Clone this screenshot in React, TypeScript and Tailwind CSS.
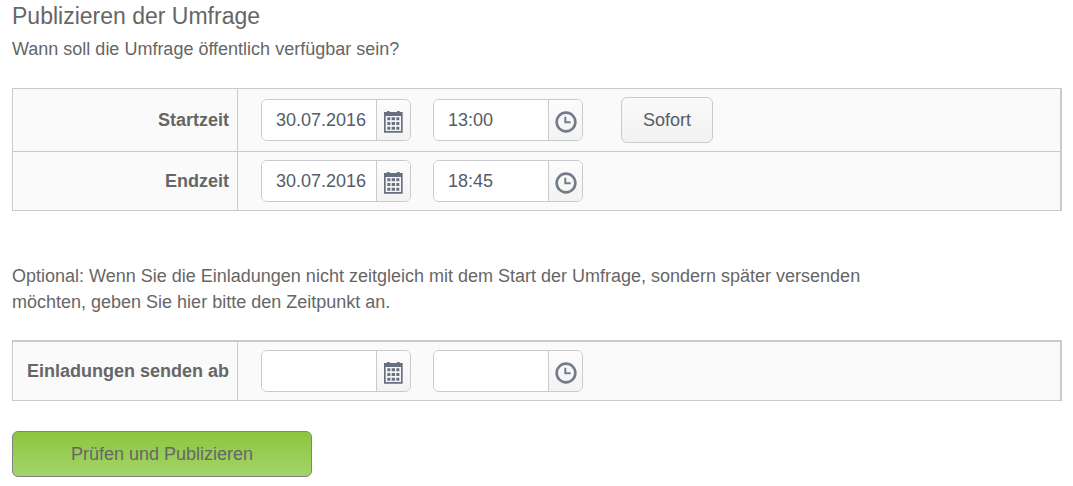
import { useState } from "react";

type PickerFieldProps = { label: string; kind: "date" | "time"; value: string; onChange: (value: string) => void };

function CalendarIcon() {
    return (
        <svg width="19" height="22" viewBox="0 0 57 66" fill="#667080" aria-hidden="true">
            <path d="M9 0h8v6H9zM39 0h8v6h-8z" />
            <path fillRule="evenodd" d="M0 3h56v62H0zM5 15v45h46V15z" />
            <path d="M10 19h9v9h-9zM23 19h10v9H23zM37 19h9v9h-9zM10 33h9v9h-9zM23 33h10v9H23zM37 33h9v9h-9zM10 47h9v9h-9zM23 47h10v9H23zM37 47h9v9h-9z" />
        </svg>
    );
}

function ClockIcon() {
    return (
        <svg width="22" height="22" viewBox="0 0 66 66" fill="none" stroke="#747b89" aria-hidden="true">
            <circle cx="33" cy="33" r="28" strokeWidth="8" />
            <path d="M31 17v17h16" strokeWidth="6" />
        </svg>
    );
}

function PickerField({ label, kind, value, onChange }: PickerFieldProps) {
    return (
        <div className="flex h-[42px] w-[150px] overflow-hidden rounded-md border border-[#c9cacf] bg-white">
            <input type="text" aria-label={label} value={value} onChange={(e) => onChange(e.target.value)}
                className="min-w-0 flex-1 bg-white pl-3.5 text-lg text-[#555c69] outline-none" />
            <button type="button" aria-label={`${label} auswählen`}
                className="flex w-[34px] shrink-0 items-center justify-center border-l border-[#c9cacf] bg-linear-to-b from-[#fcfcfc] to-[#f3f3f3] pt-1">
                {kind === "date" ? <CalendarIcon /> : <ClockIcon />}
            </button>
        </div>
    );
}

type TimeRowProps = { title: string; date: string; time: string; children?: React.ReactNode };

function TimeRow({ title, date: initialDate, time: initialTime, children }: TimeRowProps) {
    const [date, setDate] = useState(initialDate);
    const [time, setTime] = useState(initialTime);

    return (
        <tr>
            <th scope="row" className="w-[226px] border-x border-b border-[#cacaca] pr-2 text-right font-bold">{title}</th>
            <td className="border-r-2 border-b border-[#cacaca] py-2 pl-[23px]">
                <div className="flex items-center gap-[22px]">
                    <PickerField label={`${title} Datum`} kind="date" value={date} onChange={setDate} />
                    <PickerField label={`${title} Uhrzeit`} kind="time" value={time} onChange={setTime} />
                    {children}
                </div>
            </td>
        </tr>
    );
}

export default function App() {
    return (
        <main className="pr-[11px] pb-2 pl-3 font-['Liberation_Sans',Arial,sans-serif] text-lg leading-[26px] text-[#666]">
            <h1 className="text-[23px] leading-8">Publizieren der Umfrage</h1>
            <p className="mt-1">Wann soll die Umfrage öffentlich verfügbar sein?</p>

            <table className="mt-[26px] w-full border-separate border-spacing-0 border-t border-[#cacaca] bg-[#fafafa]">
                <tbody>
                    <TimeRow title="Startzeit" date="30.07.2016" time="13:00">
                        <button type="button" className="ml-4 h-[46px] w-[92px] rounded-md border border-[#c9cacf] bg-linear-to-b from-[#fafafa] to-[#f1f1f1] text-[#555c69]">Sofort</button>
                    </TimeRow>
                    <TimeRow title="Endzeit" date="30.07.2016" time="18:45" />
                </tbody>
            </table>

            <p className="mt-[52px] max-w-4xl">
                Optional: Wenn Sie die Einladungen nicht zeitgleich mit dem Start der Umfrage, sondern später versenden möchten, geben Sie hier bitte den Zeitpunkt an.
            </p>

            <table className="mt-[25px] w-full border-separate border-spacing-0 border-t-2 border-[#cacaca] bg-[#fafafa]">
                <tbody>
                    <TimeRow title="Einladungen senden ab" date="" time="" />
                </tbody>
            </table>

            <button type="submit" className="mt-[30px] h-[46px] w-[300px] rounded-md border border-[#7f8483] bg-linear-to-b from-[#8cc63f] to-[#a3d468]">Prüfen und Publizieren</button>
        </main>
    );
}
